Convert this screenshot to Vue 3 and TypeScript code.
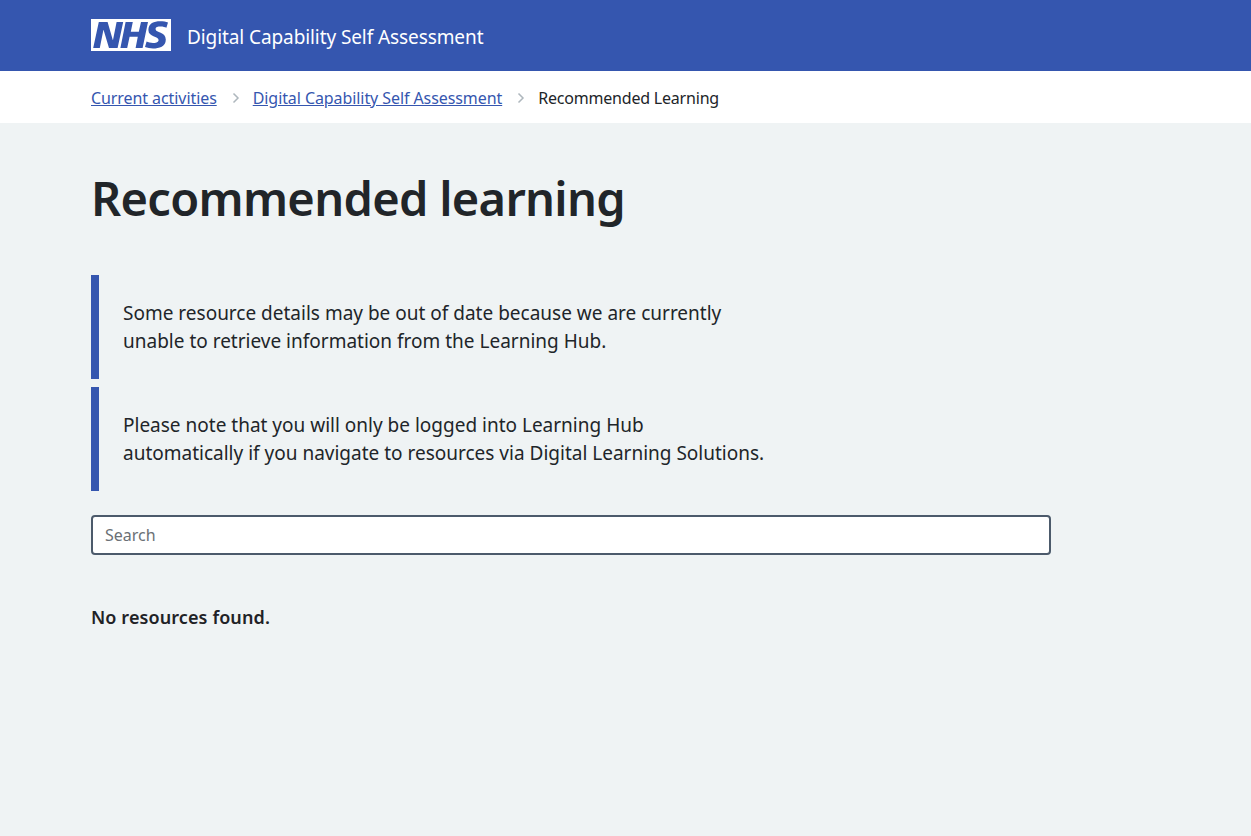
<script setup lang="ts">
const notices: string[][] = [
  ['Some resource details may be out of date because we are currently', 'unable to retrieve information from the Learning Hub.'],
  ['Please note that you will only be logged into Learning Hub', 'automatically if you navigate to resources via Digital Learning Solutions.'],
]
</script>

<template>
  <div class="page">
    <header class="header">
      <svg class="logo" viewBox="0 0 40 16" role="img" aria-label="NHS">
        <path fill="#fff" d="M0 0h40v16H0z" />
        <path fill="#3556af" d="M3.900 1.500h4.400l2.600 9h.1l1.800-9h3.300l-2.800 13H9l-2.700-9h-.1l-1.800 9H1.100M17.300 1.500h3.600l-1 4.900h4L25 1.500h3.500l-2.700 13h-3.500l1.100-5.600h-4.100l-1.200 5.600h-3.400M37.700 4.400c-.7-.3-1.600-.6-2.900-.6-1.400 0-2.500.2-2.500 1.300 0 1.800 5.100 1.200 5.100 5.100 0 3.600-3.300 4.500-6.400 4.500-1.300 0-2.900-.3-4-.7l.8-2.700c.7.4 2.100.7 3.200.7s2.800-.2 2.800-1.500c0-2.100-5.100-1.300-5.100-5 0-3.400 2.900-4.400 5.800-4.400 1.600 0 3.100.2 4 .6" />
      </svg>
      <span class="service">Digital Capability Self Assessment</span>
    </header>

    <nav class="crumbs">
      <a href="#">Current activities</a>
      <svg class="chev" viewBox="0 0 8 12"><path d="M1.500 1.500 6 6l-4.500 4.500" /></svg>
      <a href="#">Digital Capability Self Assessment</a>
      <svg class="chev" viewBox="0 0 8 12"><path d="M1.500 1.500 6 6l-4.500 4.500" /></svg>
      <span>Recommended Learning</span>
    </nav>

    <main class="main">
      <h1>Recommended learning</h1>
      <div class="notices">
        <div v-for="(n, i) in notices" :key="i" class="inset">
          <p v-for="line in n" :key="line">{{ line }}</p>
        </div>
      </div>
      <input class="search" type="text" placeholder="Search" />
      <p class="empty">No resources found.</p>
    </main>
  </div>
</template>

<style>
html, body { margin: 0; background: #eff3f4; }
</style>

<style scoped>
.page {
  min-height: 836px;
  display: flex;
  flex-direction: column;
  background: #eff3f4;
  color: #212529;
  font-family: "Noto Sans", "Open Sans", sans-serif;
}
.header {
  height: 71px;
  box-sizing: border-box;
  padding-left: 91px;
  display: flex;
  align-items: center;
  gap: 16px;
  background: #3556af;
}
.logo { width: 80px; height: 32px; display: block; margin-bottom: 1px; }
.service { color: #fff; font-size: 19px; line-height: 28px; letter-spacing: -0.09px; padding-top: 2px; }
.crumbs {
  height: 52px;
  box-sizing: border-box;
  padding: 2px 0 0 91px;
  display: flex;
  align-items: center;
  background: #fff;
  font-size: 16px;
  line-height: 24px;
}
.crumbs a { color: #3556af; text-decoration: underline; letter-spacing: -0.08px; }
.crumbs span { color: #212529; letter-spacing: -0.2px; }
.chev {
  width: 8px;
  height: 12px;
  margin: 0 13px 0 15px;
  fill: none;
  stroke: #aeb7bd;
  stroke-width: 1.500;
}
.main { padding: 48px 0 0 91px; }
h1 {
  margin: 0;
  height: 56px;
  font-size: 47px;
  line-height: 54px;
  font-weight: 600;
  letter-spacing: -0.700px;
  color: #212529;
}
.notices {
  margin-top: 48px;
  display: flex;
  flex-direction: column;
  gap: 8px;
}
.inset {
  width: 960px;
  box-sizing: border-box;
  padding: 24px;
  border-left: 8px solid #3556af;
  font-size: 19px;
  line-height: 28px;
}
.inset p { margin: 0; white-space: nowrap; }
.search {
  display: block;
  width: 960px;
  height: 40px;
  margin-top: 24px;
  box-sizing: border-box;
  padding: 0 12px;
  border: 2px solid #4c5a6b;
  border-radius: 4px;
  background: #fff;
  font: inherit;
  font-size: 16px;
  color: #212529;
}
.search::placeholder { color: #6b7075; opacity: 1; }
.empty {
  margin: 48px 0 0;
  font-size: 18px;
  line-height: 28px;
  font-weight: 600;
  letter-spacing: 0.1px;
  color: #1f2226;
}
</style>
